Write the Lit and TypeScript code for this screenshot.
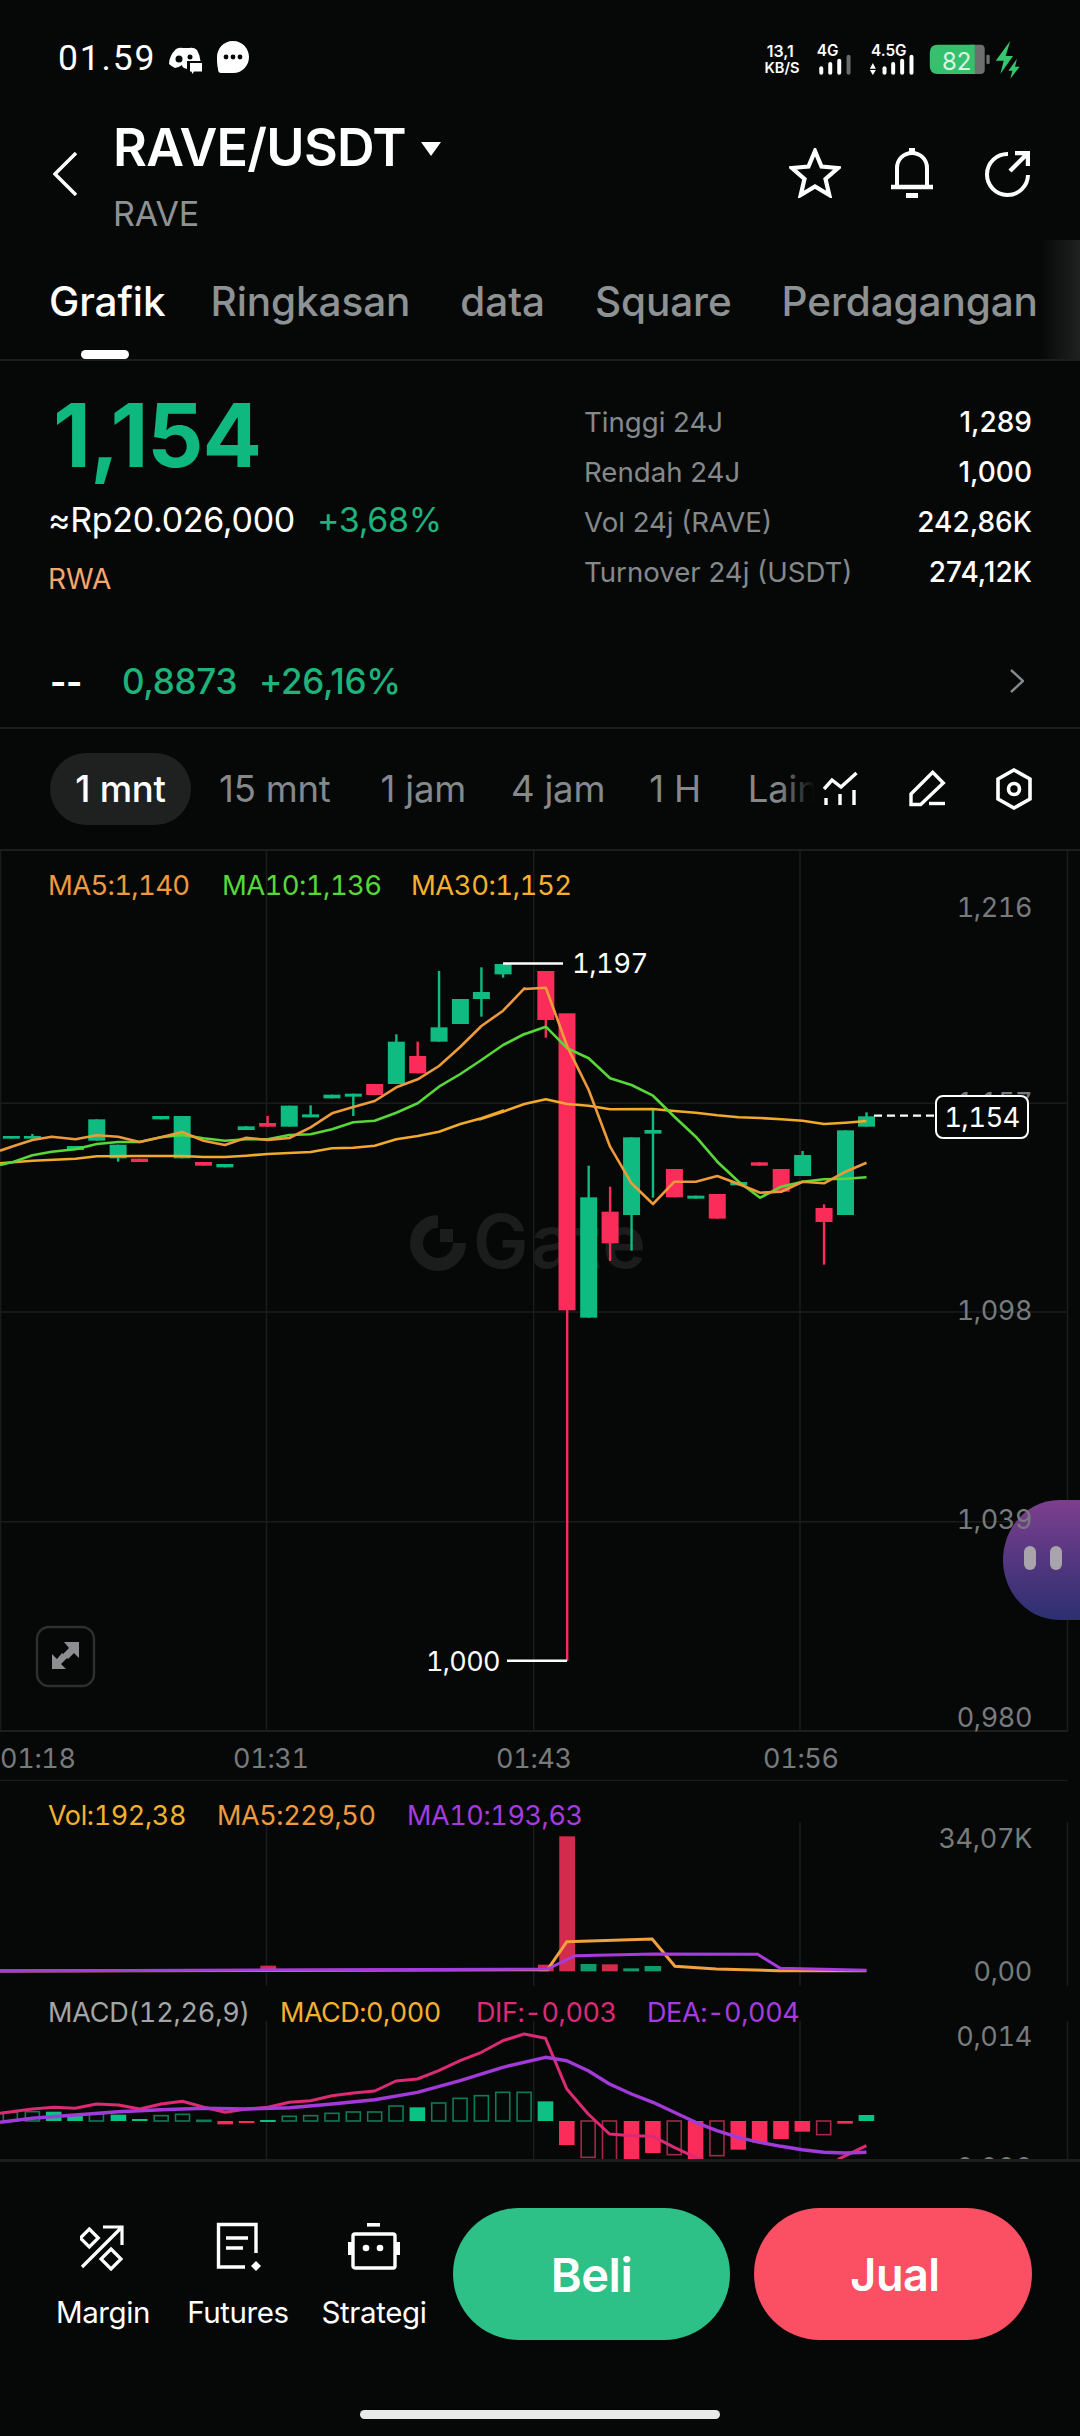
import { LitElement, html, css, svg } from "lit";
import { customElement } from "lit/decorators.js";

const z3x = (x: number) => x / 2.904;
const z3y = (y: number) => 850 + y / 3;
const z4x = (x: number) => 480 + x / 2.613;
const z4y = (y: number) => 930 + y / 3;
const z5x = (x: number) => x / 1.452;
const z5y = (y: number) => 1780 + y / 3;

const GREEN = "#0fbb80";
const RED = "#fb2c5a";

type C = [number, number, number, number, number, string];
// x, bodyTop, bodyBottom, wickTop, wickBottom, colour (zoom units)
const c3: C[] = [
  [33, 858, 866, 858, 866, "g"], [94, 858, 866, 852, 866, "g"], [219, 888, 900, 888, 900, "g"],
  [281, 808, 872, 808, 872, "g"], [343, 884, 925, 884, 935, "g"], [405, 926, 936, 926, 936, "r"],
  [467, 798, 808, 798, 808, "g"], [529, 798, 925, 798, 925, "g"], [591, 936, 947, 936, 947, "r"],
  [653, 942, 952, 942, 952, "g"], [715, 829, 840, 829, 840, "g"], [777, 819, 830, 798, 830, "r"],
  [840, 767, 830, 767, 830, "g"], [902, 793, 802, 766, 802, "g"], [964, 734, 745, 734, 745, "g"],
  [1026, 731, 740, 731, 798, "g"], [1088, 702, 735, 702, 735, "r"], [1151, 575, 702, 553, 702, "g"],
  [1213, 618, 670, 575, 670, "r"], [1275, 532, 575, 363, 575, "g"], [1337, 447, 522, 447, 522, "g"],
  [1398, 426, 447, 352, 500, "g"], [1461, 342, 373, 342, 383, "g"],
];
const c4: C[] = [
  [172, 123, 270, 123, 323, "r"], [284, 802, 1163, 707, 1163, "g"], [340, 845, 940, 770, 993, "r"],
  [396, 622, 855, 622, 962, "g"], [452, 600, 611, 540, 803, "g"], [508, 717, 802, 717, 802, "r"],
  [564, 797, 806, 797, 806, "g"], [620, 792, 866, 792, 866, "r"], [676, 756, 766, 756, 766, "g"],
  [730, 697, 707, 697, 707, "r"], [787, 717, 785, 717, 785, "r"], [843, 675, 738, 663, 738, "g"],
  [899, 834, 876, 823, 1004, "r"], [955, 601, 855, 601, 855, "g"], [1010, 559, 590, 547, 590, "g"],
];

const ma5 =
  pts3([0,902,40,888,94,870,150,860,219,868,281,856,343,860,405,876,467,862,529,846,591,872,653,885,715,863,777,870,840,864,902,832,964,790,1026,771,1088,753,1151,712,1213,688,1275,648,1337,590,1398,528,1461,482,1523,415]) +
  " " + pts4([116,177,172,173,200,260,228,350,284,480,340,650,396,760,452,822,508,755,564,755,620,738,676,762,732,788,787,785,843,755,899,760,955,725,1010,698]);
const ma10 =
  pts3([0,945,40,935,94,916,150,905,219,898,281,882,343,876,405,876,467,862,529,855,591,865,653,872,715,868,777,868,840,855,902,853,964,838,1026,817,1088,812,1151,788,1213,760,1275,710,1337,672,1398,630,1461,585,1523,552]) +
  " " + pts4([116,313,172,290,228,355,284,385,340,445,396,465,452,497,508,560,564,620,620,695,676,755,732,803,787,770,843,755,899,748,955,746,1010,742]);
const ma30 =
  pts3([0,940,94,932,219,926,281,919,405,918,529,918,591,921,653,921,715,917,777,912,902,906,964,895,1026,893,1088,887,1151,868,1213,858,1275,845,1337,822,1398,805,1461,782]) +
  " " + pts4([0,568,60,545,116,522,172,508,228,522,284,527,340,538,452,537,508,543,564,548,620,556,676,562,732,564,787,568,843,572,899,582,955,578,1010,573]);

function pts3(a: number[]) { const o: string[] = []; for (let i = 0; i < a.length; i += 2) o.push(`${z3x(a[i]).toFixed(1)},${z3y(a[i + 1]).toFixed(1)}`); return o.join(" "); }
function pts4(a: number[]) { const o: string[] = []; for (let i = 0; i < a.length; i += 2) o.push(`${z4x(a[i]).toFixed(1)},${z4y(a[i + 1]).toFixed(1)}`); return o.join(" "); }
function pts5(a: number[]) { const o: string[] = []; for (let i = 0; i < a.length; i += 2) o.push(`${z5x(a[i]).toFixed(1)},${z5y(a[i + 1]).toFixed(1)}`); return o.join(" "); }

function candle(cx: number, top: number, bot: number, wt: number, wb: number, col: string) {
  const fill = col === "g" ? GREEN : RED;
  return svg`
    <rect x=${cx - 1.2} y=${wt} width="2.4" height=${Math.max(wb - wt, 0)} fill=${fill}></rect>
    <rect x=${cx - 8.5} y=${top} width="17" height=${bot - top} fill=${fill}></rect>`;
}

// vol bars: x0, x1, top, bottom, colour
const volBars: [number, number, number, number, string][] = [
  [378, 401, 560, 577, "#d42a4e"], [781, 804, 557, 577, "#d42a4e"], [812, 835, 172, 577, "#d42a4e"],
  [843, 866, 555, 577, "#0f9a6b"], [874, 897, 556, 577, "#d42a4e"], [905, 928, 568, 577, "#0f9a6b"], [936, 960, 561, 577, "#0f9a6b"],
];

// macd bars: centre, extreme y, filled
const macd: [number, number, boolean][] = [
  [15,1000,false],[47,998,false],[78,998,true],[109,1008,true],[140,1005,false],[172,1007,true],[203,1020,true],[234,1010,false],[265,1006,false],[296,1024,false],
  [327,1036,true],[358,1028,true],[389,1023,true],[420,1012,false],[451,1010,false],[482,1003,false],[513,999,false],[544,999,false],[575,981,false],[606,985,true],
  [637,972,false],[668,958,false],[699,950,false],[730,940,false],[761,940,false],[792,967,true],
  [823,1098,true],[854,1135,false],[885,1180,false],[917,1180,true],[948,1122,true],[979,1127,false],[1010,1180,true],[1041,1130,false],[1072,1112,true],[1103,1090,true],[1134,1080,true],[1165,1058,true],[1196,1067,false],[1227,1034,true],[1258,1008,true],
];

const dif = pts5([0,1003,47,990,78,985,109,988,140,975,172,978,203,990,234,975,265,967,296,985,327,1000,358,990,389,985,420,970,451,965,482,950,513,942,544,936,575,906,606,900,637,875,668,845,699,820,730,785,761,765,792,778,823,930,854,1005,885,1065,917,1070,948,1072,979,1105,1010,1135,1041,1160,1100,1200,1180,1200,1220,1138,1258,1100]);
const dea = pts5([0,1030,47,1018,109,1008,172,998,234,992,296,988,358,990,420,986,482,975,544,962,606,940,668,905,730,865,792,835,823,845,854,875,885,915,917,945,948,970,979,1000,1010,1030,1041,1055,1072,1075,1103,1090,1134,1102,1165,1112,1196,1120,1227,1122,1258,1120]);
const volMa5 = pts5([0,576,795,572,823,488,947,480,980,562,1040,570,1130,575,1258,575]);
const volMa10 = pts5([0,576,795,570,835,530,950,525,1100,526,1133,568,1258,574]);

@customElement("app-root")
export class AppRoot extends LitElement {
  static styles = css`
    :host { display: block; width: 1080px; height: 2436px; background: #060808; color: #fff; font-family: Inter, "Noto Sans", sans-serif; overflow: hidden; position: relative; }
    .status { height: 100px; display: flex; justify-content: space-between; padding: 38px 57px 0 58px; box-sizing: border-box; }
    .status-left { display: flex; align-items: center; height: 40px; font-size: 35.5px; font-weight: 400; font-family: Roboto, sans-serif; letter-spacing: 1.8px; }
    .status-left svg { display: block; }
    .ic1 { margin-left: 13px; margin-top: 4px; }
    .ic2 { margin-left: 14px; margin-top: -2px; }
    .status-right { display: block; margin-top: 0; }
    .header { height: 140px; display: flex; box-sizing: border-box; position: relative; }
    .back { width: 114px; flex: none; padding: 52px 0 0 53px; box-sizing: border-box; }
    .titles { flex: 1; padding-top: 18px; }
    .title { display: flex; height: 60px; align-items: center; font-size: 52px; font-weight: 600; letter-spacing: -0.7px; line-height: 60px; margin-left: -1px; }
    .title svg { margin-left: 15px; margin-top: 2px; }
    .sub { font-size: 34px; line-height: 40px; margin-top: 16px; color: #8e9293; font-weight: 400; letter-spacing: -0.2px; margin-left: -1px; }
    .actions { display: flex; padding: 48px 50px 0 0; gap: 50px; align-items: flex-start; }
    .tabs { height: 121px; border-bottom: 2px solid #1c1e1e; box-sizing: border-box; position: relative; display: flex; gap: 50px; padding: 0 0 0 49px; align-items: flex-start; overflow: hidden; }
    .tab { font-size: 40.5px; font-weight: 500; line-height: 44px; margin-top: 40px; color: #8e9293; white-space: nowrap; letter-spacing: -0.1px; }
    .tab.on { color: #fff; margin-right: -5px; }
    .ind { position: absolute; left: 81px; bottom: 0; width: 48px; height: 9px; border-radius: 5px; background: #fff; }
    .fade { position: absolute; right: 0; top: 0; bottom: 0; width: 40px; background: linear-gradient(90deg, rgba(30,32,32,0), #202222); }
    .stats { height: 279px; box-sizing: border-box; display: flex; justify-content: space-between; padding: 0 48px 0 48px; }
    .left { padding-top: 28px; }
    .price { font-size: 88px; line-height: 92px; font-weight: 700; color: #0fb87e; margin-left: 5px; letter-spacing: -1px; }
    .sub-price { display: flex; align-items: center; gap: 22px; font-size: 34px; line-height: 40px; margin-top: 19px; letter-spacing: -0.3px; }
    .up { color: #1fb37c; }
    .rwa { color: #f4a66e; font-size: 28px; line-height: 32px; margin-top: 23px; }
    .right { width: 448px; padding-top: 44px; display: flex; flex-direction: column; gap: 16px; }
    .kv { display: flex; justify-content: space-between; height: 34px; line-height: 34px; font-size: 27.6px; color: #85898b; }
    .kv b { color: #fff; font-weight: 500; font-size: 28px; letter-spacing: 0; }
    .ticker { height: 89px; border-bottom: 2px solid #1c1e1e; box-sizing: border-box; display: flex; align-items: flex-start; padding: 19px 56px 0 50px; font-size: 35px; line-height: 44px; letter-spacing: -0.3px; font-weight: 500; }
    .dash { width: 72px; flex: none; font-weight: 700; }
    .ticker .v1 { margin-right: 22px; }
    .ticker .grow { flex: 1; }
    .frames { height: 122px; box-sizing: border-box; border-bottom: 2px solid #1c1e1e; display: flex; align-items: flex-start; padding: 24px 48px 0 50px; position: relative; }
    .scroller { width: 765px; flex: none; display: flex; align-items: center; height: 72px; overflow: hidden; position: relative; font-size: 36.5px; color: #85898b; white-space: nowrap; letter-spacing: -0.2px; }
    .pill { width: 141px; height: 72px; flex: none; border-radius: 36px; background: #1f2121; color: #fff; font-weight: 500; display: flex; align-items: center; justify-content: center; margin-right: 28px; }
    .scroller span { margin-right: 50px; }
    .scroller span.f1 { margin-right: 45px; }
    .scroller span.f2 { margin-right: 44px; }
    .scroller span.f3 { margin-right: 47px; }
    .scroller::after { content: ""; position: absolute; right: 0; top: 0; bottom: 0; width: 36px; background: linear-gradient(90deg, rgba(6,8,8,0), #060808); }
    .tools { flex: 1; display: flex; align-items: center; justify-content: space-between; height: 72px; margin-left: 8px; }
    .pane { display: block; }
    .pane text { font-family: Inter, sans-serif; font-variant-numeric: tabular-nums; }
    .bottom { height: 277px; border-top: 3px solid #1c1e1e; box-sizing: border-box; position: relative; }
    .actionsbar { display: flex; padding: 46px 48px 0 0; align-items: flex-start; }
    .tool { display: flex; flex-direction: column; align-items: center; font-size: 29.5px; line-height: 34px; letter-spacing: -0.4px; position: relative; }
    .tool svg { display: block; height: 50px; }
    .tool span { margin-top: 24px; white-space: nowrap; }
    .t1 { width: 90px; margin: 13px 0 0 58px; }
    .t2 { width: 100px; margin: 13px 0 0 40px; }
    .t3 { width: 104px; margin: 13px 0 0 34px; }
    .btn { height: 132px; border-radius: 66px; display: flex; align-items: center; justify-content: center; font-size: 47px; font-weight: 600; width: 277px; letter-spacing: -0.5px; }
    .buy { background: #2dc087; margin-left: 27px; }
    .sell { background: #fb4f63; margin-left: 24px; width: 278px; font-size: 45px; padding-left: 4px; box-sizing: border-box; }
    .home { position: absolute; left: 360px; top: 248px; width: 360px; height: 9px; border-radius: 5px; background: #e8eaea; }
  `;

  private statusLeft() {
    return html`<div class="status-left">01.59
      <svg class="ic1" width="34" height="28" viewBox="0 0 34 28">
        <path fill="#fff" d="M7 3 Q11 1 14 2 H20 Q25 1 28 4 Q31 9 31.5 15 H18 V23 L15 22 Q13 21 13 19 Q9 22 6 22 Q2 20 0 18 Q0 10 7 3Z"/>
        <circle cx="10" cy="13" r="3.5" fill="#060808"/><circle cx="21" cy="11" r="2.5" fill="#060808"/>
        <path fill="#fff" d="M21 17 H33 V25.5 H25 L23.5 28 L22.5 25.5 H21Z"/>
      </svg>
      <svg class="ic2" width="32" height="32" viewBox="0 0 32 32">
        <path fill="#fff" d="M16 0 C26 0 32 8 32 16 C32 24 26 32 16 32 H4 Q1 32 1 28 C0 24 0 20 0 16 C0 8 6 0 16 0Z"/>
        <circle cx="9" cy="16" r="2.4" fill="#060808"/><circle cx="16" cy="16" r="2.4" fill="#060808"/><circle cx="23" cy="16" r="2.4" fill="#060808"/>
      </svg>
    </div>`;
  }

  private statusRight() {
    const bar = (x: number, top: number, fill = "#fff") => svg`<rect x=${x} y=${top} width="12" height=${160 - top} rx="6" fill=${fill}></rect>`;
    return html`<svg class="status-right" width="263" height="43" viewBox="120 50 790 129">
      <g fill="#fff" font-family="Inter, sans-serif" font-weight="600">
        <text x="181" y="108" font-size="48" text-anchor="middle">13,1</text>
        <text x="186" y="156" font-size="44" text-anchor="middle">KB/S</text>
        <text x="323" y="105" font-size="46" text-anchor="middle">4G</text>
        <text x="507" y="105" font-size="46" text-anchor="middle">4.5G</text>
      </g>
      ${bar(298, 135)}${bar(325, 122)}${bar(352, 112)}${bar(380, 100, "#6a6c6c")}
      ${bar(488, 135)}${bar(514, 122)}${bar(541, 112)}${bar(569, 100)}
      <path fill="#fff" d="M450 142 L459 125 L468 142Z M450 146 H468 L459 161Z"/>
      <path fill="#6d6f6f" d="M750 70 H782 Q795 70 795 83 V145 Q795 158 782 158 H750Z"/>
      <path fill="#34c06c" d="M654 70 H765 V158 H654 Q630 158 630 134 V94 Q630 70 654 70Z"/>
      <rect x="800" y="100" width="10" height="28" rx="4" fill="#6d6f6f"/>
      <text x="711" y="147" font-size="72" text-anchor="middle" fill="#d8f6e2" font-family="Inter, sans-serif">82</text>
      <path fill="#35c76f" d="M872 58 L828 118 H852 L842 158 L880 104 H858Z M892 112 L866 148 H878 L872 172 L900 136 H886Z"/>
    </svg>`;
  }

  private mainPane() {
    const vs = [0.5, 266.5, 533.7, 800, 1067.5];
    const hs = [1103.3, 1312, 1521.7];
    const axis = [["1,216", 907], ["1,157", 1102], ["1,098", 1310], ["1,039", 1519], ["0,980", 1717]] as [string, number][];
    return html`<svg class="pane" width="1080" height="930" viewBox="0 851 1080 930">
      <defs>
        <linearGradient id="ball" x1="0" y1="0" x2="0" y2="1"><stop offset="0" stop-color="#7c3f8e"/><stop offset="1" stop-color="#2c2f72"/></linearGradient>
      </defs>
      ${vs.map((x) => svg`<line x1=${x} x2=${x} y1="851" y2="1731" stroke="#1a1c1c" stroke-width="1.5"></line>`)}
      ${hs.map((y) => svg`<line x1="0" x2="1068" y1=${y} y2=${y} stroke="#1a1c1c" stroke-width="1.5"></line>`)}
      <line x1="0" x2="1068" y1="1731" y2="1731" stroke="#1c1e1e" stroke-width="2"></line>
      <line x1="0" x2="1068" y1="1781" y2="1781" stroke="#1c1e1e" stroke-width="2"></line>

      <path d="M438 1221.5 A21.5 21.5 0 1 0 459.5 1243" fill="none" stroke="#1b1d1d" stroke-width="13"></path>
      <rect x="440" y="1229" width="13" height="13" fill="#1b1d1d"></rect>
      <text x="473" y="1268" font-size="74" font-weight="600" fill="#1b1d1d" letter-spacing="2">Gate</text>

      <path d="M1080 1500 H1060 C1025 1500 1003 1530 1003 1560 C1003 1590 1025 1620 1060 1620 H1080Z" fill="url(#ball)"></path>
      <rect x="1024" y="1546" width="12" height="24" rx="6" fill="#a9a4ac"></rect>
      <rect x="1050" y="1546" width="12" height="24" rx="6" fill="#a9a4ac"></rect>

      ${axis.map(([t, y]) => svg`<text x="1032" y=${y + 10} font-size="27" fill="#787b7d" text-anchor="end" letter-spacing="-0.4">${t}</text>`)}

      ${c3.map((c) => candle(z3x(c[0]), z3y(c[1]), z3y(c[2]), z3y(c[3]), z3y(c[4]), c[5]))}
      ${c4.map((c) => candle(z4x(c[0]), z4y(c[1]), z4y(c[2]), z4y(c[3]), z4y(c[4]), c[5]))}
      <rect x="558.5" y="1013.3" width="17" height="297" fill=${RED}></rect>
      <rect x="566" y="1310" width="2.4" height="351" fill=${RED}></rect>

      <polyline points=${ma30} fill="none" stroke="#f2aa2a" stroke-width="2.6" stroke-linejoin="round"></polyline>
      <polyline points=${ma10} fill="none" stroke="#58d838" stroke-width="2.6" stroke-linejoin="round"></polyline>
      <polyline points=${ma5} fill="none" stroke="#ee9a3a" stroke-width="2.6" stroke-linejoin="round"></polyline>

      <text x="48" y="895" font-size="27.5" fill="#ee9a3d" letter-spacing="-0.7">MA5:1,140</text>
      <text x="222" y="895" font-size="27.5" fill="#58d838" letter-spacing="-0.6">MA10:1,136</text>
      <text x="411" y="895" font-size="27.5" fill="#f5b02e" letter-spacing="-0.5">MA30:1,152</text>

      <line x1="503" x2="563" y1="963.5" y2="963.5" stroke="#fff" stroke-width="2.4"></line>
      <text x="572" y="973" font-size="27.5" fill="#fff" letter-spacing="-0.6">1,197</text>
      <line x1="507" x2="567" y1="1660.8" y2="1660.8" stroke="#fff" stroke-width="2.4"></line>
      <text x="426" y="1671" font-size="27" fill="#fff" letter-spacing="-0.7">1,000</text>

      <line x1="874" x2="934" y1="1115.7" y2="1115.7" stroke="#fff" stroke-width="2.2" stroke-dasharray="8 5"></line>
      <rect x="936" y="1096" width="92" height="42" rx="7" fill="#060808" stroke="#fff" stroke-width="2"></rect>
      <text x="982" y="1127" font-size="27.5" fill="#fff" text-anchor="middle" letter-spacing="-0.6">1,154</text>

      <rect x="37" y="1627" width="57" height="59" rx="12" fill="none" stroke="#2e3030" stroke-width="2.4"></rect>
      <path fill="#8c8e8f" d="M79 1642 V1658 L74 1653 L68 1659 L63 1654 L69 1648 L64 1642Z M52 1669 V1654 L57 1659 L62 1653 L67 1658 L61 1664 L66 1669Z"></path>

      ${[["01:18", 0], ["01:31", 233], ["01:43", 496], ["01:56", 763]].map(([t, x]) => svg`<text x=${x} y="1768" font-size="27" fill="#787b7d" letter-spacing="-0.3">${t}</text>`)}
    </svg>`;
  }

  private lowerPane() {
    const vs = [266.5, 533.7, 800, 1067.5];
    return html`<svg class="pane" width="1080" height="378" viewBox="0 1782 1080 378">
      ${vs.map((x) => svg`<line x1=${x} x2=${x} y1="1823" y2="1987" stroke="#1a1c1c" stroke-width="1.5"></line>
        <line x1=${x} x2=${x} y1="2022" y2="2160" stroke="#1a1c1c" stroke-width="1.5"></line>`)}
      <text x="48" y="1826" font-size="27" fill="#f5b02e" letter-spacing="-0.4">Vol:192,38</text>
      <text x="217" y="1826" font-size="27" fill="#ee9a3d" letter-spacing="-0.4">MA5:229,50</text>
      <text x="407" y="1826" font-size="27" fill="#a63be0" letter-spacing="-0.4">MA10:193,63</text>
      <text x="1032" y="1849" font-size="27" fill="#787b7d" text-anchor="end" letter-spacing="-0.3">34,07K</text>
      <text x="1032" y="1982" font-size="27" fill="#787b7d" text-anchor="end" letter-spacing="-0.3">0,00</text>
      ${volBars.map((b) => svg`<rect x=${z5x(b[0])} y=${z5y(b[2])} width=${z5x(b[1] - b[0])} height=${(b[3] - b[2]) / 3} fill=${b[4]}></rect>`)}
      <polyline points=${volMa5} fill="none" stroke="#f0a23c" stroke-width="3"></polyline>
      <polyline points=${volMa10} fill="none" stroke="#a63be0" stroke-width="3"></polyline>

      <text x="48" y="2023" font-size="27" fill="#a3a5a6" letter-spacing="-0.2">MACD(12,26,9)</text>
      <text x="280" y="2023" font-size="27" fill="#f5b02e" letter-spacing="-0.5">MACD:0,000</text>
      <text x="476" y="2023" font-size="27" fill="#dd2a78" letter-spacing="-0.4">DIF:-0,003</text>
      <text x="647" y="2023" font-size="27" fill="#a63be0" letter-spacing="-0.4">DEA:-0,004</text>
      <text x="1032" y="2047" font-size="27" fill="#787b7d" text-anchor="end" letter-spacing="-0.3">0,014</text>
      <text x="1032" y="2178" font-size="27" fill="#787b7d" text-anchor="end" letter-spacing="-0.3">0,006</text>

      ${macd.map(([cx, y, filled]) => {
        const base = 1026;
        const isUp = y < base;
        const col = isUp ? (filled ? "#0cc184" : "#0f7a58") : (filled ? "#fb2c5a" : "#a12a46");
        const top = z5y(Math.min(y, base));
        const h = Math.abs(y - base) / 3;
        const x = z5x(cx) - 7.8;
        return filled
          ? svg`<rect x=${x} y=${top} width="15.6" height=${Math.max(h, 2)} fill=${col}></rect>`
          : svg`<rect x=${x + 0.8} y=${top} width="14" height=${Math.max(h, 1)} fill="none" stroke=${col} stroke-width="1.6"></rect>`;
      })}
      <polyline points=${dif} fill="none" stroke="#dc2a74" stroke-width="3" stroke-linejoin="round"></polyline>
      <polyline points=${dea} fill="none" stroke="#a23ad8" stroke-width="3.4" stroke-linejoin="round"></polyline>
    </svg>`;
  }

  render() {
    return html`
      <div class="status">${this.statusLeft()}${this.statusRight()}</div>
      <div class="header">
        <div class="back"><svg width="24" height="44" viewBox="0 0 24 44"><path d="M23 1 L2 22 L23 43" fill="none" stroke="#fff" stroke-width="3.4"/></svg></div>
        <div class="titles">
          <div class="title">RAVE/USDT<svg width="20" height="14" viewBox="0 0 20 14"><path d="M0 0 H20 L10 14Z" fill="#fff"/></svg></div>
          <div class="sub">RAVE</div>
        </div>
        <div class="actions">
          <svg width="52" height="50" viewBox="0 0 52 50"><path d="M26 3 L32.5 18.6 L49 20 L36.5 31 L40.3 47 L26 38.4 L11.7 47 L15.5 31 L3 20 L19.5 18.6Z" fill="none" stroke="#fff" stroke-width="4.2" stroke-linejoin="miter"/></svg>
          <svg width="42" height="50" viewBox="0 0 42 50"><path d="M6 39 V20 C6 11 13 5 21 5 C29 5 36 11 36 20 V39" fill="none" stroke="#fff" stroke-width="4"/><path d="M0 39 H42" stroke="#fff" stroke-width="4.4"/><rect x="18" y="0" width="6" height="6" fill="#fff"/><rect x="15" y="45" width="12" height="5" fill="#fff"/></svg>
          <svg width="45" height="46" viewBox="0 0 45 46" style="margin:3px 0 0 2px"><path d="M23 3 A20.5 20.5 0 1 0 43 24" fill="none" stroke="#fff" stroke-width="4"/><path d="M25 20 L42 3 M30 2 H43 V15" fill="none" stroke="#fff" stroke-width="4.4"/></svg>
        </div>
      </div>
      <div class="tabs">
        <div class="tab on">Grafik</div><div class="tab">Ringkasan</div><div class="tab">data</div><div class="tab">Square</div><div class="tab">Perdagangan</div>
        <div class="ind"></div><div class="fade"></div>
      </div>
      <div class="stats">
        <div class="left">
          <div class="price">1,154</div>
          <div class="sub-price"><span>≈Rp20.026,000</span><span class="up">+3,68%</span></div>
          <div class="rwa">RWA</div>
        </div>
        <div class="right">
          <div class="kv"><span>Tinggi 24J</span><b>1,289</b></div>
          <div class="kv"><span>Rendah 24J</span><b>1,000</b></div>
          <div class="kv"><span>Vol 24j (RAVE)</span><b>242,86K</b></div>
          <div class="kv"><span>Turnover 24j (USDT)</span><b>274,12K</b></div>
        </div>
      </div>
      <div class="ticker">
        <span class="dash">--</span>
        <span class="up v1">0,8873</span><span class="up">+26,16%</span>
        <span class="grow"></span>
        <svg width="14" height="44" viewBox="0 0 14 44"><path d="M1 11 L13 22 L1 33" fill="none" stroke="#85898b" stroke-width="2.4"/></svg>
      </div>
      <div class="frames">
        <div class="scroller">
          <div class="pill">1 mnt</div><span>15 mnt</span><span class="f1">1 jam</span><span class="f2">4 jam</span><span class="f3">1 H</span><span>Lain</span>
        </div>
        <div class="tools">
          <svg width="36" height="38" viewBox="0 0 36 38"><path d="M1 19 L9 10 L18 17 L33.5 3" fill="none" stroke="#fff" stroke-width="3.4"/><path d="M3 28 V35 M17 24 V35 M31 20 V35" stroke="#fff" stroke-width="3.4"/></svg>
          <svg width="37" height="38" viewBox="0 0 37 38"><path d="M2 34.5 V24 L23.7 2.3 L34.3 13 L11.7 34.5Z" fill="none" stroke="#fff" stroke-width="3.4"/><path d="M20 33.5 H36" stroke="#fff" stroke-width="3.4"/></svg>
          <svg width="36" height="42" viewBox="0 0 36 42"><path d="M18 2 L34 11 V31 L18 40 L2 31 V11Z" fill="none" stroke="#fff" stroke-width="3.6"/><circle cx="18" cy="21" r="5.5" fill="none" stroke="#fff" stroke-width="3.6"/></svg>
        </div>
      </div>
      ${this.mainPane()}
      ${this.lowerPane()}
      <div class="bottom">
        <div class="actionsbar">
          <div class="tool t1">
            <svg width="46" height="50" viewBox="0 0 46 50"><path d="M9.3 8 L18.3 17 L9.3 26 L0.3 17Z M31 28 L41 38 L31 48 L21 38Z" fill="none" stroke="#fff" stroke-width="3.2"/><path d="M2 46 L42 6 M23 6 H42 V24" fill="none" stroke="#fff" stroke-width="3.2"/></svg>
            <span>Margin</span>
          </div>
          <div class="tool t2">
            <svg width="46" height="50" viewBox="0 0 46 50"><path d="M30 46 H3.5 V3.5 H41 V32" fill="none" stroke="#fff" stroke-width="3.4"/><path d="M11 17 H33 M11 27 H28" stroke="#fff" stroke-width="3.4"/><path d="M41 40 L46 45 L41 50 L36 45Z" fill="#fff"/></svg>
            <span>Futures</span>
          </div>
          <div class="tool t3">
            <svg width="52" height="50" viewBox="0 0 52 50"><rect x="5" y="13" width="42" height="34" rx="2" fill="none" stroke="#fff" stroke-width="3.4"/><rect x="19" y="2" width="13" height="3.6" fill="#fff"/><rect x="0" y="21" width="4" height="13" fill="#fff"/><rect x="48" y="21" width="4" height="13" fill="#fff"/><circle cx="18" cy="27" r="3.3" fill="#fff"/><circle cx="32" cy="27" r="3.3" fill="#fff"/></svg>
            <span>Strategi</span>
          </div>
          <div class="btn buy">Beli</div>
          <div class="btn sell">Jual</div>
        </div>
        <div class="home"></div>
      </div>
    `;
  }
}
